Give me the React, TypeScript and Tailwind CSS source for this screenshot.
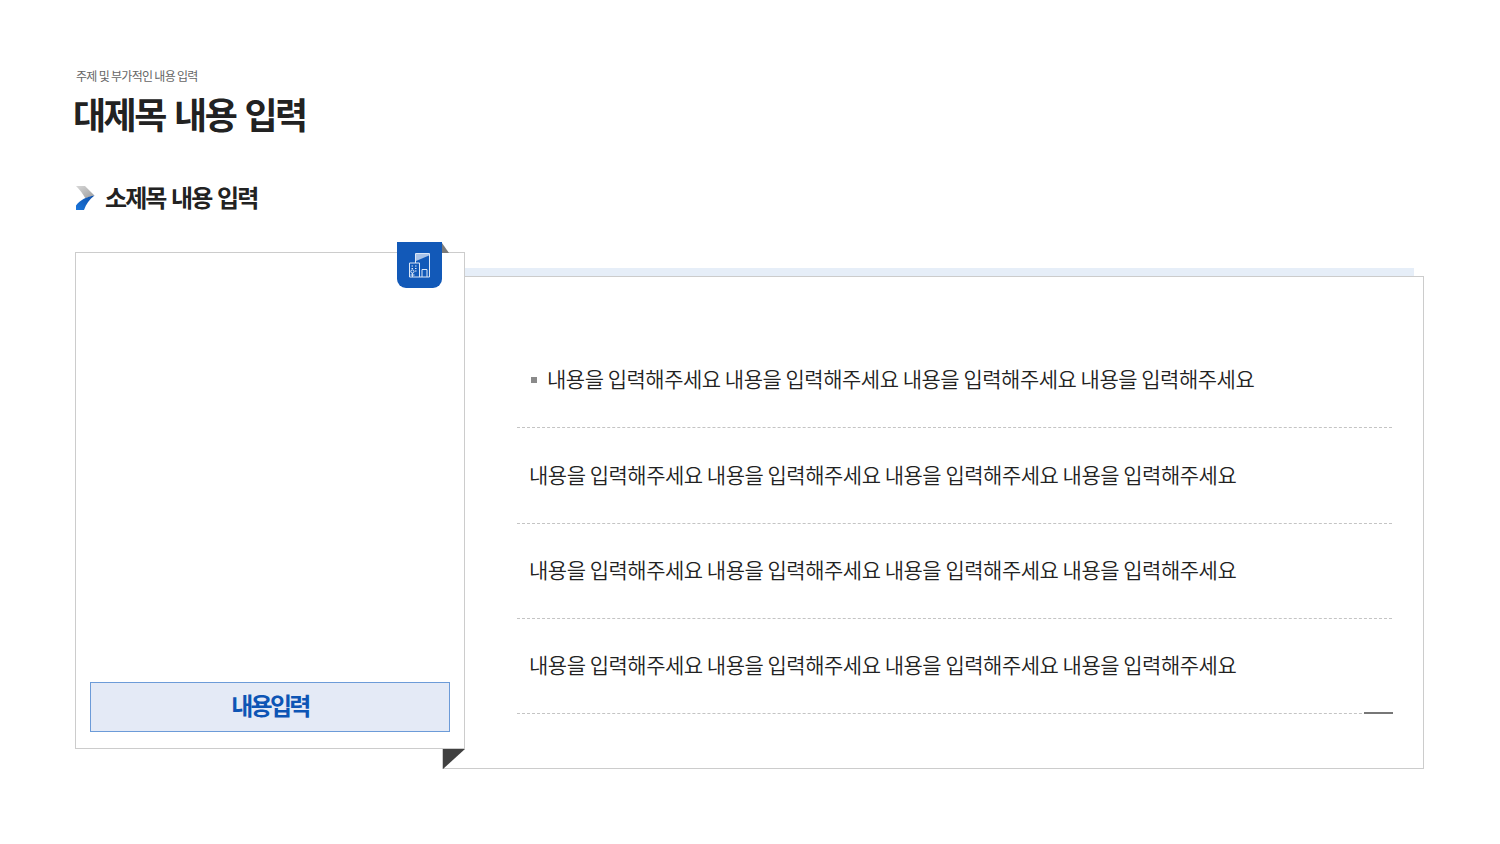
import React from 'react';

const fontClass = "font-['Noto_Sans_CJK_KR','Noto_Sans',sans-serif]";
const line = '내용을 입력해주세요 내용을 입력해주세요 내용을 입력해주세요 내용을 입력해주세요';

const Chevron = () => (
  <svg width="20" height="26" viewBox="0 0 20 26" className="shrink-0 ml-px mt-[3px]">
    <defs>
      <linearGradient id="chevGray" x1="0" y1="0" x2="1" y2="1">
        <stop offset="0" stopColor="#d8d8d8" />
        <stop offset="1" stopColor="#9c9c9c" />
      </linearGradient>
      <linearGradient id="chevBlue" x1="1" y1="0" x2="0" y2="1">
        <stop offset="0" stopColor="#0f4fa8" />
        <stop offset="1" stopColor="#1a76dc" />
      </linearGradient>
    </defs>
    <path d="M0 0H9L18.5 9.5C15 10 12 11 9.5 12.5C7 8 4 4 0 0Z" fill="url(#chevGray)" />
    <path d="M18.5 9.5C11 10.5 4 14 0 19.5V24H8C10 18 13.5 13.5 18.5 9.5Z" fill="url(#chevBlue)" />
  </svg>
);

const BuildingIcon = () => (
  <svg width="24" height="26" viewBox="0 0 24 26" fill="none" stroke="#dbe7f7" strokeWidth="1">
    <path d="M7.5 11V1.5H21.5V25H1.5V11H11.5V25" />
    <path d="M8 9V2H21V3.5Z" fill="#a9c3e8" stroke="none" />
    <path d="M14 25V17.5H19V25" />
    <path d="M3.5 14H5M7 14H8.5M3.5 16.5H5M7 16.5H8.5M7 19H8.5" />
    <circle cx="4.4" cy="19.5" r="1.6" fill="#1259b8" />
    <path d="M4.4 21V25M2.5 23H6.5" />
  </svg>
);

const Row = ({ bullet, accent }: { bullet?: boolean; accent?: boolean }) => (
  <div className="relative h-[95.33px] flex items-center pl-3 border-b border-dashed border-[#c4c4c4]">
    {bullet && <span className="w-[6px] h-[6px] bg-[#8a8a8a] ml-[2px] mr-[10px] shrink-0" />}
    <span className="text-[21px] tracking-[-0.49px] text-[#222222] font-[350] whitespace-nowrap pb-[2px]">{line}</span>
    {accent && <span className="absolute -right-px bottom-[-1px] w-[29px] h-[2px] bg-[#777777]" />}
  </div>
);

export default function App() {
  return (
    <div className={`${fontClass} w-[1500px] h-[844px] bg-white overflow-hidden pt-[67px] pl-[75px]`}>
      <p className="ml-px text-[12px] leading-[18px] tracking-[-0.7px] text-[#666666]">주제 및 부가적인 내용 입력</p>
      <h1 className="-ml-[2px] text-[36px] leading-[56px] font-bold tracking-[-2.5px] [word-spacing:3.5px] text-[#222222]">대제목 내용 입력</h1>

      <div className="mt-[41px] flex items-center gap-[10px] h-[30px]">
        <Chevron />
        <h2 className="-ml-px text-[24px] leading-[30px] font-bold tracking-[-1.9px] [word-spacing:2px] text-[#222222]">소제목 내용 입력</h2>
      </div>

      <div className="mt-[30px] flex items-start">
        <div className="relative z-10 mt-[10px] w-[390px] h-[497px] shrink-0 bg-white border border-[#cccccc] flex flex-col justify-end px-[14px] pb-[16px]">
          <div className="absolute -top-[11px] right-[22px] w-[45px] h-[46px] rounded-b-[9px] bg-[#1259b8] flex items-center justify-center">
            <BuildingIcon />
          </div>
          <span className="absolute -top-[10px] right-[15px] w-[7px] h-[10px] bg-[#7a7a7a] [clip-path:polygon(0_0,100%_100%,0_100%)]" />
          <div className="h-[50px] bg-[#e4eaf6] border border-[#6c9bd8] flex items-center justify-center text-[24px] font-bold tracking-[-2.7px] text-[#0d55b5]">
            <span className="-mt-[5px]">내용입력</span>
          </div>
          <span className="absolute -bottom-[21px] -right-px w-[22px] h-[20px] bg-[#404040] [clip-path:polygon(0_0,100%_0,0_100%)]" />
        </div>

        <div className="-ml-[23px] mt-[26px] flex flex-col">
          <div className="ml-[23px] mr-[10px] h-2 bg-[#e6eef8]" />
          <div className="w-[982px] h-[493px] border border-[#cccccc] bg-white pt-[56px] pl-[74px] pr-[31px]">
            <Row bullet />
            <Row />
            <Row />
            <Row accent />
          </div>
        </div>
      </div>
    </div>
  );
}
